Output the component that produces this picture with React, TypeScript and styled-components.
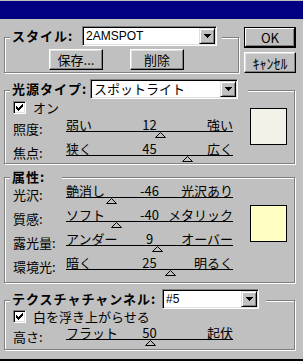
import React from 'react';
import styled, { createGlobalStyle } from 'styled-components';

const GlobalStyle = createGlobalStyle`
  html, body {
    margin: 0;
    padding: 0;
    background: #c0c0c0;
  }
  body {
    font-family: "Noto Sans CJK JP", "Liberation Sans", sans-serif;
    font-size: 13px;
    color: #000;
  }
  * {
    box-sizing: border-box;
  }
`;

const Window = styled.div`
  width: 303px;
  height: 361px;
  padding-top: 1px;
  background: #c0c0c0;
  border-bottom: 2px solid #000;
  overflow: hidden;
`;

const TitleBar = styled.div`
  height: 18px;
  background: #000080;
`;

const TopRow = styled.div`
  display: flex;
  align-items: flex-start;
`;

// etched group box, gray line with a white line under it
const Group = styled.div<{ $top: number; $width?: number; $pb: number }>`
  width: ${({ $width }) => $width ?? 291}px;
  margin: ${({ $top }) => $top}px 0 0 4px;
  padding-bottom: ${({ $pb }) => $pb}px;
  border: 1px solid #808080;
  box-shadow: inset 1px 1px 0 #fff, 1px 1px 0 #fff;
`;

const GroupHeader = styled.div<{ $lift: number; $h: number; $pr: number }>`
  display: flex;
  align-items: center;
  width: fit-content;
  height: ${({ $h }) => $h}px;
  margin: -${({ $lift }) => $lift}px 0 0 5px;
  padding: 0 ${({ $pr }) => $pr}px 0 2px;
  background: #c0c0c0;
`;

const GroupTitle = styled.span<{ $w?: number }>`
  width: ${({ $w }) => ($w ? `${$w}px` : 'auto')};
  font-weight: bold;
  letter-spacing: 1px;
  line-height: 14px;
  white-space: nowrap;
`;

const Combo = styled.div<{ $w: number }>`
  display: flex;
  align-items: center;
  width: ${({ $w }) => $w}px;
  height: 20px;
  padding: 1px;
  border: 1px solid;
  border-color: #808080 #fff #fff #808080;
  box-shadow: inset 1px 1px 0 #000, inset -1px -1px 0 #dfdfdf;
  background: #fff;
`;

const ComboValue = styled.span<{ $latin?: boolean }>`
  flex: 1;
  padding-left: 2px;
  font-family: ${({ $latin }) => ($latin ? '"Liberation Sans", sans-serif' : 'inherit')};
  font-size: ${({ $latin }) => ($latin ? 12 : 13)}px;
  line-height: 16px;
  white-space: nowrap;
`;

const DropButton = styled.div`
  display: flex;
  align-items: center;
  justify-content: center;
  width: 16px;
  height: 16px;
  border: 1px solid;
  border-color: #dfdfdf #000 #000 #dfdfdf;
  box-shadow: inset 1px 1px 0 #fff, inset -1px -1px 0 #808080;
  background: #c0c0c0;
`;

const ButtonRow = styled.div`
  display: flex;
  gap: 27px;
  margin: 3px 0 2px 44px;
`;

const ButtonColumn = styled.div`
  display: flex;
  flex-direction: column;
  gap: 4px;
  margin: 8px 0 0 5px;
`;

const Button = styled.button<{ $w: number; $default?: boolean; $fs?: number }>`
  display: flex;
  align-items: center;
  justify-content: center;
  width: ${({ $w }) => $w}px;
  height: 21px;
  padding: 0;
  font-family: inherit;
  font-size: ${({ $fs }) => $fs ?? 13}px;
  color: #000;
  background: #c0c0c0;
  border: 1px solid;
  border-color: ${({ $default }) => ($default ? '#000' : '#fff #000 #000 #fff')};
  box-shadow: ${({ $default }) =>
    $default
      ? 'inset -1px -1px 0 #000, inset 1px 1px 0 #fff, inset -2px -2px 0 #808080'
      : 'inset -1px -1px 0 #808080, inset 1px 1px 0 #dfdfdf'};
`;

const GroupBody = styled.div`
  display: flex;
  align-items: flex-start;
`;

const Controls = styled.div`
  flex: 1;
  display: flex;
  flex-direction: column;
  padding-left: 8px;
`;

const CheckRow = styled.label<{ $mt: number }>`
  display: flex;
  align-items: center;
  gap: 7px;
  height: 13px;
  margin-top: ${({ $mt }) => $mt}px;
  line-height: 13px;
  white-space: nowrap;
`;

const CheckBox = styled.span`
  display: block;
  width: 13px;
  height: 13px;
  padding: 2px;
  border: 1px solid;
  border-color: #808080 #fff #fff #808080;
  box-shadow: inset 1px 1px 0 #000, inset -1px -1px 0 #dfdfdf;
  background: #fff;
`;

const SliderRow = styled.div<{ $mt: number }>`
  display: flex;
  height: 20px;
  margin-top: ${({ $mt }) => $mt}px;
`;

const RowLabel = styled.span`
  width: 53px;
  padding-top: 4px;
  line-height: 14px;
  white-space: nowrap;
`;

const Track = styled.div`
  position: relative;
  width: 167px;
  height: 20px;
`;

const TrackText = styled.div`
  display: grid;
  grid-template-columns: 1fr auto 1fr;
  height: 14px;
  line-height: 13px;
  border-bottom: 1px solid #000;
  white-space: nowrap;
`;

const TrackMax = styled.span`
  text-align: right;
`;

const Thumb = styled.svg`
  position: absolute;
  top: 14px;
  display: block;
`;

const Swatch = styled.div<{ $color: string; $mt: number }>`
  width: 37px;
  height: 37px;
  margin: ${({ $mt }) => $mt}px 7px 0 0;
  border: 1px solid #000;
  background: ${({ $color }) => $color};
`;

const CheckMark = () => {
  const runs = [
    [6, 0, 1], [5, 1, 2], [0, 2, 1], [4, 2, 3], [0, 3, 2], [3, 3, 3],
    [0, 4, 5], [1, 5, 3], [2, 6, 1],
  ];
  return (
    <svg width="7" height="7" viewBox="0 0 7 7" shapeRendering="crispEdges" style={{ display: 'block' }}>
      {runs.map(([x, y, w], i) => (
        <rect key={i} x={x} y={y} width={w} height={1} fill="#000" />
      ))}
    </svg>
  );
};

const Arrow = () => (
  <svg width="7" height="4" viewBox="0 0 7 4" shapeRendering="crispEdges">
    <path d="M0 0h7v1h-1v1h-1v1h-1v1h-1v-1h-1v-1h-1v-1h-1z" fill="#000" />
  </svg>
);

type SliderData = {
  label: string;
  min: string;
  max: string;
  value: number;
  lo?: number;
  hi?: number;
};

const Slider = ({ label, min, max, value, lo = -100, hi = 100, mt }: SliderData & { mt: number }) => {
  const pct = ((value - lo) / (hi - lo)) * 100;
  return (
    <SliderRow $mt={mt}>
      <RowLabel>{label}</RowLabel>
      <Track>
        <TrackText>
          <span>{min}</span>
          <span>{value}</span>
          <TrackMax>{max}</TrackMax>
        </TrackText>
        <Thumb width="11" height="6" viewBox="0 0 11 6" style={{ left: `calc(${pct}% - 5px)` }}>
          <polygon points="5.5,0.5 10.5,5.5 0.5,5.5" fill="none" stroke="#000" strokeWidth="1" />
        </Thumb>
      </Track>
    </SliderRow>
  );
};

const lightSliders: SliderData[] = [
  { label: '照度:', min: '弱い', max: '強い', value: 12 },
  { label: '焦点:', min: '狭く', max: '広く', value: 45 },
];

const propSliders: SliderData[] = [
  { label: '光沢:', min: '艶消し', max: '光沢あり', value: -46 },
  { label: '質感:', min: 'ソフト', max: 'メタリック', value: -40 },
  { label: '露光量:', min: 'アンダー', max: 'オーバー', value: 9 },
  { label: '環境光:', min: '暗く', max: '明るく', value: 25 },
];

const App = () => (
  <>
    <GlobalStyle />
    <Window>
      <TitleBar />

      <TopRow>
        <Group $top={18} $width={235} $pb={0}>
          <GroupHeader $lift={12} $h={20} $pr={5}>
            <GroupTitle $w={70}>スタイル:</GroupTitle>
            <Combo $w={135}>
              <ComboValue $latin>2AMSPOT</ComboValue>
              <DropButton><Arrow /></DropButton>
            </Combo>
          </GroupHeader>
          <ButtonRow>
            <Button $w={54}>保存...</Button>
            <Button $w={54}>削除</Button>
          </ButtonRow>
        </Group>
        <ButtonColumn>
          <Button $w={52} $default>OK</Button>
          <Button $w={52} $fs={14}>ｷｬﾝｾﾙ</Button>
        </ButtonColumn>
      </TopRow>

      <Group $top={17} $pb={1}>
        <GroupHeader $lift={12} $h={20} $pr={10}>
          <GroupTitle $w={78}>光源タイプ:</GroupTitle>
          <Combo $w={148}>
            <ComboValue>スポットライト</ComboValue>
            <DropButton><Arrow /></DropButton>
          </Combo>
        </GroupHeader>
        <GroupBody>
          <Controls>
            <CheckRow $mt={2}>
              <CheckBox><CheckMark /></CheckBox>
              オン
            </CheckRow>
            {lightSliders.map((s) => (
              <Slider key={s.label} {...s} mt={4} />
            ))}
          </Controls>
          <Swatch $color="#f2f2e8" $mt={9} />
        </GroupBody>
      </Group>

      <Group $top={13} $pb={6}>
        <GroupHeader $lift={8} $h={14} $pr={17}>
          <GroupTitle>属性:</GroupTitle>
        </GroupHeader>
        <GroupBody>
          <Controls>
            {propSliders.map((s, i) => (
              <Slider key={s.label} {...s} mt={i === 0 ? 0 : 4} />
            ))}
          </Controls>
          <Swatch $color="#ffffc4" $mt={21} />
        </GroupBody>
      </Group>

      <Group $top={17} $pb={3}>
        <GroupHeader $lift={12} $h={20} $pr={7}>
          <GroupTitle $w={150}>テクスチャチャンネル:</GroupTitle>
          <Combo $w={97}>
            <ComboValue $latin>#5</ComboValue>
            <DropButton><Arrow /></DropButton>
          </Combo>
        </GroupHeader>
        <Controls>
          <CheckRow $mt={1}>
            <CheckBox><CheckMark /></CheckBox>
            白を浮き上がらせる
          </CheckRow>
          <Slider label="高さ:" min="フラット" max="起伏" value={50} lo={0} hi={100} mt={3} />
        </Controls>
      </Group>
    </Window>
  </>
);

export default App;
